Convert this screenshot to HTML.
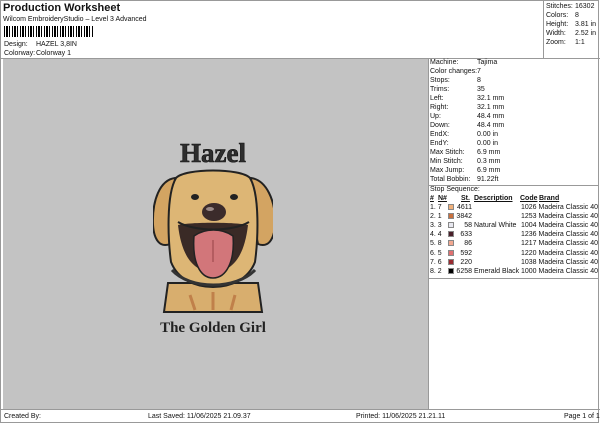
<!DOCTYPE html>
<html><head><style>
body{margin:0;width:600px;height:424px;background:#fff;font-family:"Liberation Sans",sans-serif;position:relative;overflow:hidden;color:#111}
.a{position:absolute;white-space:nowrap}
.s{font-size:7px}
.r{position:absolute;font-size:7px;white-space:nowrap}
.sw{display:inline-block;width:6px;height:6px;vertical-align:-1px;border:1px solid #888;box-sizing:border-box}
</style></head><body>
<div class="a" style="left:3px;top:2px;font-size:11px;font-weight:bold">Production Worksheet</div>
<div class="a s" style="left:3px;top:16px">Wilcom EmbroideryStudio – Level 3 Advanced</div>
<div class="a" style="left:4px;top:26px;height:11px;width:90px;background:repeating-linear-gradient(90deg,#000 0 1px,#fff 1px 2px,#000 2px 4px,#fff 4px 5px,#000 5px 6px,#fff 6px 8px)"></div>
<div class="a s" style="left:4px;top:41px">Design:</div><div class="a s" style="left:36px;top:41px">HAZEL 3,8IN</div>
<div class="a s" style="left:4px;top:50px">Colorway:</div><div class="a s" style="left:36px;top:50px">Colorway 1</div>
<div class="a" style="left:0;top:0;width:599px;height:423px;border:1px solid #999;box-sizing:border-box"></div>
<div class="a" style="left:543px;top:0;width:56px;height:58px;border-left:1px solid #999"></div>
<div class="r" style="left:546px;top:3px">Stitches:</div><div class="r" style="left:575px;top:3px">16302</div>
<div class="r" style="left:546px;top:12px">Colors:</div><div class="r" style="left:575px;top:12px">8</div>
<div class="r" style="left:546px;top:21px">Height:</div><div class="r" style="left:575px;top:21px">3.81 in</div>
<div class="r" style="left:546px;top:30px">Width:</div><div class="r" style="left:575px;top:30px">2.52 in</div>
<div class="r" style="left:546px;top:39px">Zoom:</div><div class="r" style="left:575px;top:39px">1:1</div>
<div class="a" style="left:0;top:58px;width:600px;border-top:1px solid #999"></div>
<div class="a" style="left:3px;top:59px;width:425px;height:350px;background:#c3c3c3"></div>
<div class="a" style="left:428px;top:59px;height:350px;border-left:1px solid #999"></div>
<div class="a" style="left:428px;top:185px;width:171px;border-top:1px solid #999"></div>
<div class="a" style="left:428px;top:278px;width:171px;border-top:1px solid #999"></div>
<div class="a" style="left:0;top:409px;width:600px;border-top:1px solid #999"></div>
<div id="m"></div>
<div class="r" style="left:430px;top:186px">Stop Sequence:</div>
<div class="r" style="left:430px;top:195px;font-weight:bold;text-decoration:underline">#</div>
<div class="r" style="left:438px;top:195px;font-weight:bold;text-decoration:underline">N#</div>
<div class="r" style="left:461px;top:195px;font-weight:bold;text-decoration:underline">St.</div>
<div class="r" style="left:474px;top:195px;font-weight:bold;text-decoration:underline">Description</div>
<div class="r" style="left:520px;top:195px;font-weight:bold;text-decoration:underline">Code</div>
<div class="r" style="left:539px;top:195px;font-weight:bold;text-decoration:underline">Brand</div>
<svg class="a" style="left:153px;top:135px" width="120" height="205" viewBox="153 135 120 205">
<text x="213" y="162" text-anchor="middle" font-family="Liberation Serif" font-weight="bold" font-size="27" fill="#2e2e2e" stroke="#111" stroke-width=".6">Hazel</text>
<path d="M168 283 L164 312 L262 312 L258 283 Z" fill="#d8ae6e" stroke="#222" stroke-width="2"/>
<path d="M190 295 l5 15 M235 295 l-4 15 M213 292 v18" stroke="#c0804a" stroke-width="3" fill="none"/>
<path d="M175 178 C160 180 152 200 153 225 C154 240 160 248 170 244 L175 220Z" fill="#d3a462" stroke="#222" stroke-width="2"/>
<path d="M251 178 C266 180 276 200 275 225 C274 240 268 248 258 244 L253 220Z" fill="#d3a462" stroke="#222" stroke-width="2"/>
<path d="M176 178 C185 168 241 168 250 178 C260 195 258 240 255 262 C248 280 230 287 213 287 C196 287 178 280 171 262 C168 240 166 195 176 178Z" fill="#ddb675" stroke="#222" stroke-width="2"/>
<path d="M178 225 C190 222 236 222 248 225 C244 260 230 272 213 272 C196 272 182 260 178 225Z" fill="#3a2a26"/>
<path d="M194 236 C205 228 222 228 233 236 C235 262 226 278 213 278 C200 278 192 262 194 236Z" fill="#d2767a" stroke="#222" stroke-width="1.5"/>
<path d="M213 240 v22" stroke="#a04a50" stroke-width="1.2"/>
<ellipse cx="214" cy="212" rx="12" ry="9" fill="#3b2b2b"/>
<ellipse cx="210" cy="209" rx="4" ry="2" fill="#9a8a88"/>
<ellipse cx="195" cy="197" rx="4" ry="3" fill="#222"/>
<ellipse cx="234" cy="197" rx="4" ry="3" fill="#222"/>
<path d="M178 222 C195 232 232 232 249 222" stroke="#222" stroke-width="2" fill="none"/>
<path d="M172 270 C190 290 236 290 255 270" stroke="#333" stroke-width="3" fill="none"/>
<text x="213" y="332" text-anchor="middle" font-family="Liberation Serif" font-weight="bold" font-size="15" fill="#222">The Golden Girl</text>
</svg>
<div id="t"></div>
<div class="r" style="left:4px;top:413px">Created By:</div>
<div class="r" style="left:148px;top:413px">Last Saved: 11/06/2025 21.09.37</div>
<div class="r" style="left:356px;top:413px">Printed: 11/06/2025 21.21.11</div>
<div class="r" style="left:564px;top:413px">Page 1 of 1</div>
<script>
var L=[["Machine:","Tajima"],["Color changes:","7"],["Stops:","8"],["Trims:","35"],["Left:","32.1 mm"],["Right:","32.1 mm"],["Up:","48.4 mm"],["Down:","48.4 mm"],["EndX:","0.00 in"],["EndY:","0.00 in"],["Max Stitch:","6.9 mm"],["Min Stitch:","0.3 mm"],["Max Jump:","6.9 mm"],["Total Bobbin:","91.22ft"]];
var h="";L.forEach(function(r,i){var y=59+i*9;h+='<div class="r" style="left:430px;top:'+y+'px">'+r[0]+'</div><div class="r" style="left:477px;top:'+y+'px">'+r[1]+'</div>';});
document.getElementById("m").innerHTML=h;
var T=[["1. 7","#f0b07a","4611","","1026"],["2. 1","#c9703e","3842","","1253"],["3. 3","#e8e8f0","58","Natural White","1004"],["4. 4","#4a1f2a","633","","1236"],["5. 8","#f2a890","86","","1217"],["6. 5","#e07070","592","","1220"],["7. 6","#9a2a30","220","","1038"],["8. 2","#000","6258","Emerald Black","1000"]];
h="";T.forEach(function(r,i){var y=204+i*9.1;h+='<div class="r" style="left:430px;top:'+y+'px">'+r[0]+'</div><div class="r" style="left:448px;top:'+y+'px"><span class="sw" style="background:'+r[1]+'"></span></div><div class="r" style="left:450px;width:22px;text-align:right;top:'+y+'px">'+r[2]+'</div><div class="r" style="left:474px;top:'+y+'px">'+r[3]+'</div><div class="r" style="left:521px;top:'+y+'px">'+r[4]+' Madeira Classic 40</div>';});
document.getElementById("t").innerHTML=h;
</script>
</body></html>
